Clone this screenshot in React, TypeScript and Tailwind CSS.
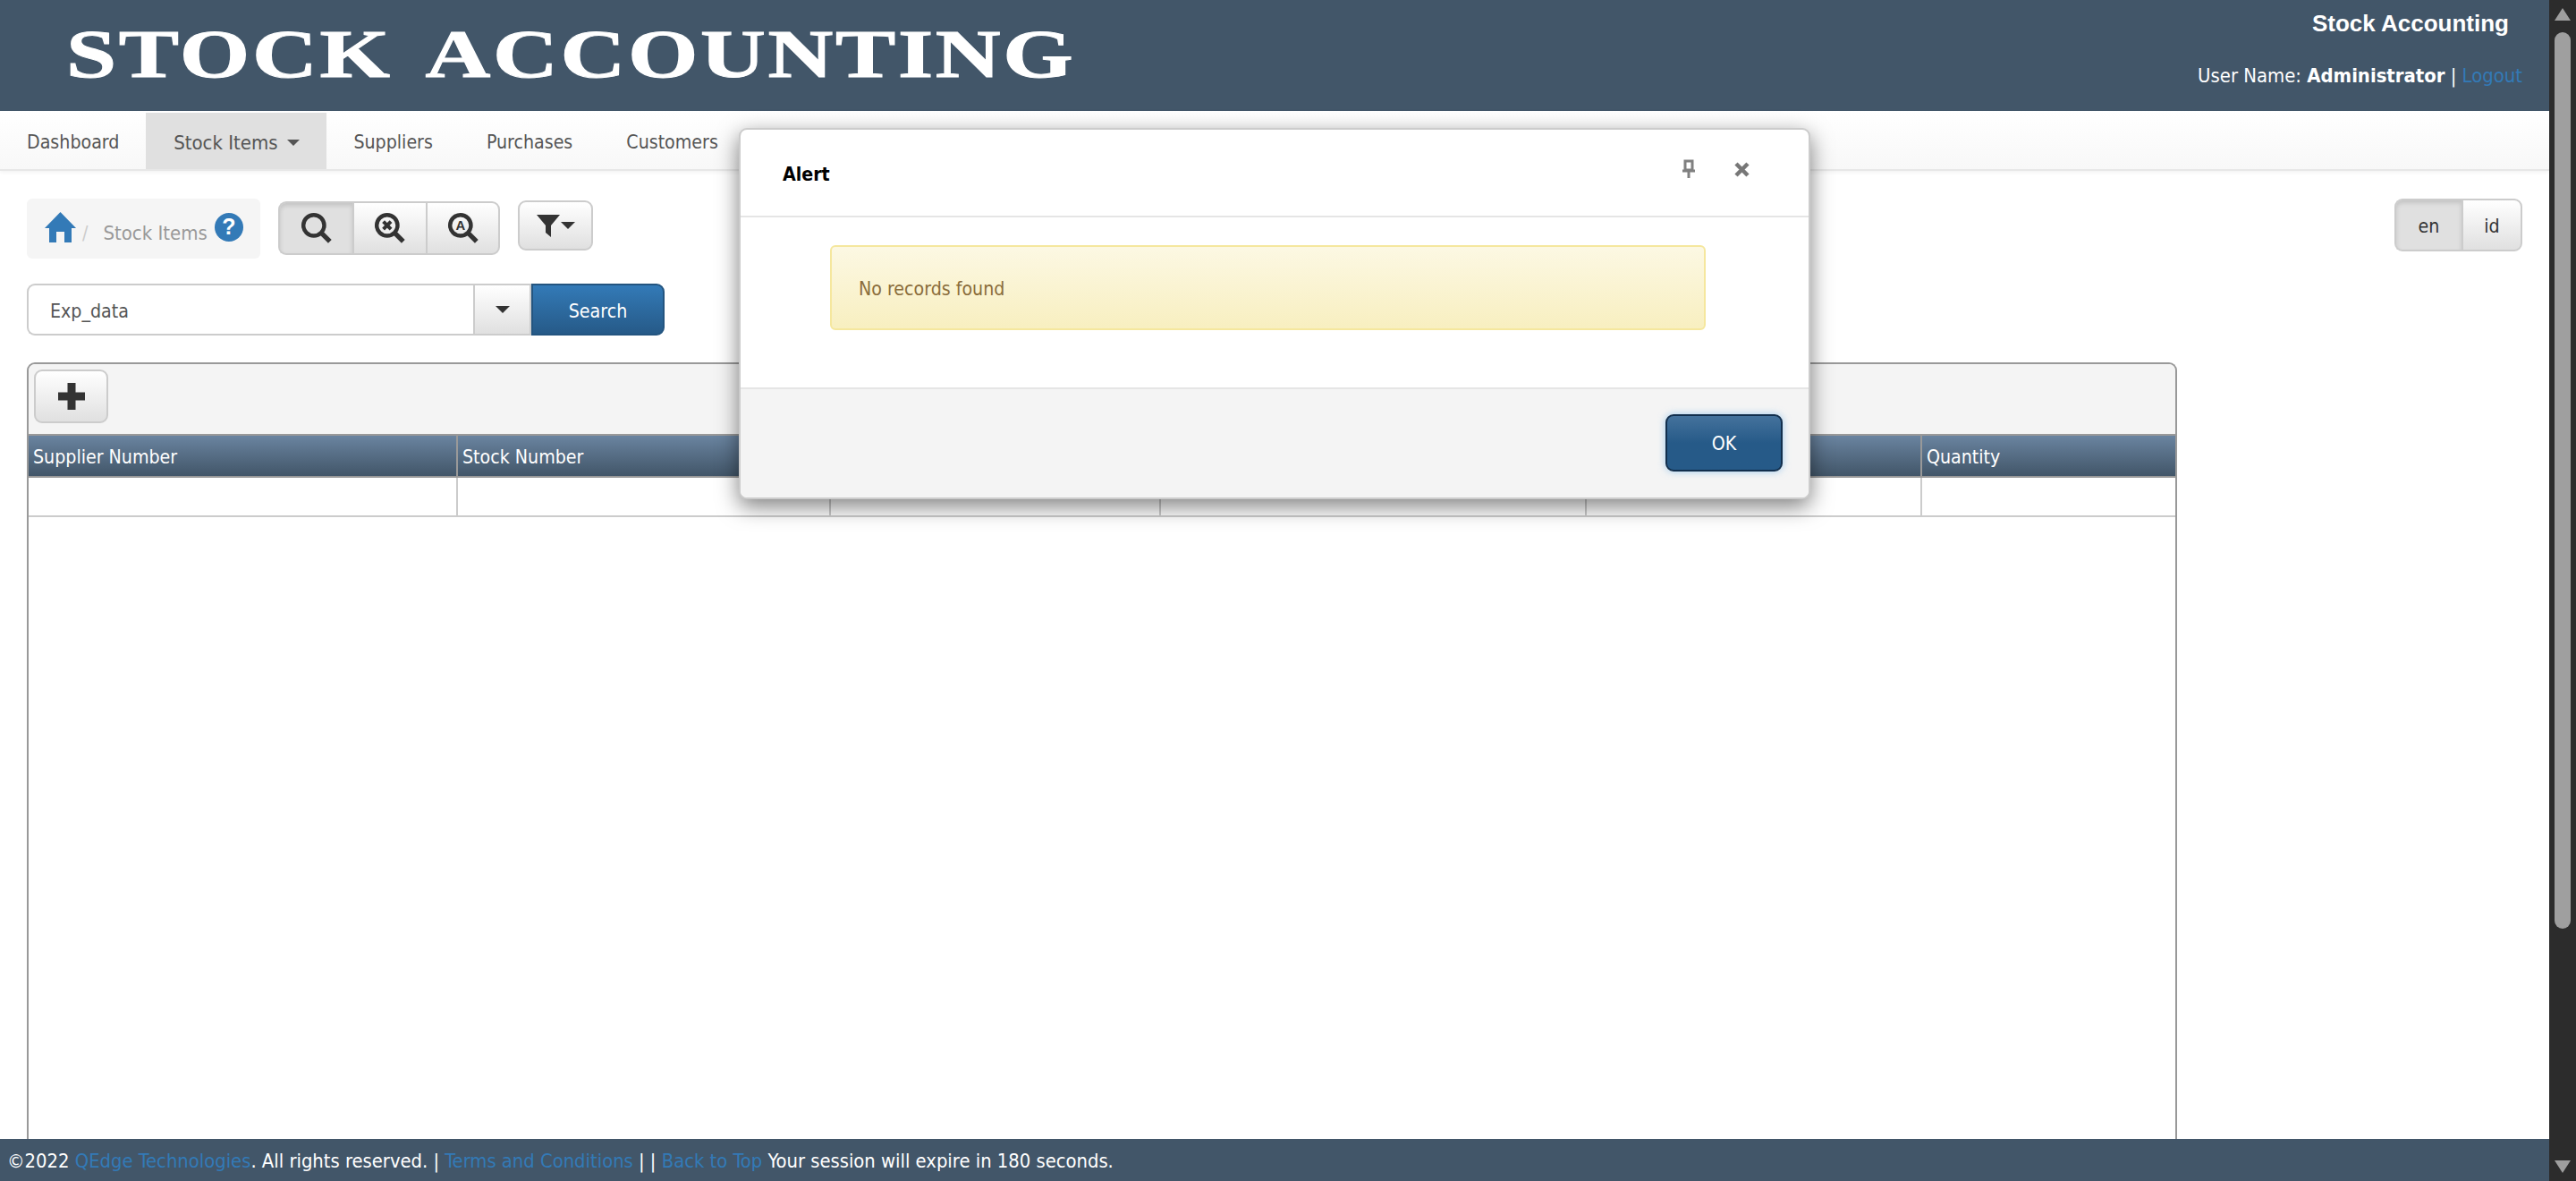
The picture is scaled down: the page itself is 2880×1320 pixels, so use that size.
import React from "react";

const tahoma = "font-['DejaVu_Sans_Condensed','DejaVu_Sans',sans-serif]";
const cols = ["Supplier Number", "Stock Number", "", "", "", "Quantity"];
const colWidths = ["w-[480px]", "w-[417px]", "w-[369px]", "w-[476px]", "w-[375px]", "flex-1"];
const navItems = ["Suppliers", "Purchases", "Customers"];

const Lens = ({ children }: { children?: React.ReactNode }) => (
  <svg width="36" height="36" viewBox="0 0 34 34" fill="none" stroke="#333" strokeWidth="4.2">
    <circle cx="14" cy="14" r="11" />
    <path d="M22 22l9 9" strokeWidth="5" />
    {children}
  </svg>
);

const btnClass =
  "flex items-center justify-center border-2 border-[#ccc] bg-gradient-to-b from-white to-[#e0e0e0]";

const App = () => {
  return (
    <div className={`relative flex h-screen overflow-hidden bg-white text-[21.2px] ${tahoma}`}>
      <div className="flex min-w-0 flex-1 flex-col">
        <header className="flex h-[124px] shrink-0 justify-between bg-[#425669] pl-[74px] pr-[30px] text-white">
          <div className="mt-[16px] origin-left scale-x-[1.327] font-['Liberation_Serif',serif] text-[76px] font-bold leading-[88px] tracking-[2px] whitespace-nowrap [word-spacing:11px] [-webkit-text-stroke:1px_#fff]">
            STOCK ACCOUNTING
          </div>
          <div className="flex flex-col items-end">
            <div className="mr-[15px] mt-[10px] font-['Liberation_Sans',sans-serif] text-[26px] font-bold leading-[32px]">
              Stock Accounting
            </div>
            <div className="mt-[29px] text-[21.9px] leading-[28px]">
              User Name: <b>Administrator</b> | <span className="text-[#337ab7]">Logout</span>
            </div>
          </div>
        </header>

        <nav className="flex h-[67px] shrink-0 items-stretch border-b-2 border-[#e7e7e7] bg-gradient-to-b from-white to-[#f8f8f8] pt-[2px] text-[#555] shadow-[0_2px_4px_rgba(0,0,0,0.05)]">
          <div className="flex items-center pl-[30px] pr-[30px] pt-[3px]">Dashboard</div>
          <div className="flex w-[202px] items-center justify-center gap-[10px] bg-[#e0e0e0] pt-[3px] text-[22px]">
            Stock Items
            <span className="border-x-[7px] border-t-[7px] border-x-transparent border-t-[#555]" />
          </div>
          {navItems.map((n) => (
            <div key={n} className="flex items-center px-[30px] pt-[3px]">
              {n}
            </div>
          ))}
        </nav>

        <div className="flex min-h-0 flex-1 flex-col px-[30px]">
          <div className="mt-[31px] flex items-start">
            <div className="flex h-[67px] w-[261px] items-center rounded-[6px] bg-[#f5f5f5] pl-[20px]">
              <svg width="35" height="34" viewBox="0 0 35 34" fill="#337ab7" className="-mt-[4px]">
                <path d="M17.5 0L35 18h-5v16h-8V22h-9v12H5V18H0z" />
              </svg>
              <span className="ml-[7px] mt-[10px] text-[#ccc]">/</span>
              <span className="ml-[17px] mt-[10px] text-[22px] text-[#999]">Stock Items</span>
              <span className="-mt-[4px] ml-[8px] flex h-[32px] w-[32px] items-center justify-center rounded-full bg-[#337ab7] font-['Liberation_Sans',sans-serif] text-[25px] font-bold text-white">
                ?
              </span>
            </div>
            <div className="ml-[20px] mt-[3px] flex h-[60px]">
              <div className="flex w-[83px] items-center justify-center rounded-l-[9px] border-2 border-r-0 border-[#ccc] bg-[#e0e0e0] shadow-[inset_0_3px_5px_rgba(0,0,0,0.125)]">
                <Lens />
              </div>
              <div className={`w-[82px] border-r-0 ${btnClass}`}>
                <Lens>
                  <path d="M10 10l8 8M18 10l-8 8" strokeWidth="3.8" />
                </Lens>
              </div>
              <div className={`w-[83px] rounded-r-[9px] ${btnClass}`}>
                <Lens>
                  <text x="14" y="19" textAnchor="middle" fontSize="14" fontWeight="700" fill="#333" stroke="none" fontFamily="Liberation Sans">
                    A
                  </text>
                </Lens>
              </div>
            </div>
            <div className={`ml-[20px] mt-[2px] h-[56px] w-[84px] gap-[1px] rounded-[9px] ${btnClass}`}>
              <svg width="26" height="26" viewBox="0 0 26 26" fill="#333">
                <path d="M0 1h26L16 13v13l-6-5v-8z" />
              </svg>
              <span className="border-x-[8px] border-t-[8px] border-x-transparent border-t-[#333]" />
            </div>
            <div className="ml-auto mt-[0px] flex h-[59px]">
              <div className="flex w-[75px] items-center justify-center rounded-l-[9px] border-2 border-r-0 border-[#ccc] bg-[#e0e0e0] pt-[2px] text-[#333] shadow-[inset_0_3px_5px_rgba(0,0,0,0.125)]">
                en
              </div>
              <div className={`w-[68px] rounded-r-[9px] pt-[2px] text-[#333] ${btnClass}`}>id</div>
            </div>
          </div>

          <div className="mt-[28px] flex h-[58px] w-[713px]">
            <div className="flex w-[499px] items-center rounded-l-[9px] border-2 border-r-0 border-[#ccc] bg-white pl-[24px] pt-[3px] text-[#555]">
              Exp_data
            </div>
            <div className={`w-[65px] ${btnClass}`}>
              <span className="border-x-[8px] border-t-[8px] border-x-transparent border-t-[#333]" />
            </div>
            <div className="flex w-[149px] items-center justify-center rounded-r-[9px] border-2 border-[#245580] bg-gradient-to-b from-[#337ab7] to-[#265a88] pt-[3px] text-white">
              Search
            </div>
          </div>

          <div className="mt-[30px] flex w-[2404px] flex-1 flex-col rounded-t-[9px] border-x-2 border-t-2 border-[#999]">
            <div className="h-[78px] shrink-0 rounded-t-[8px] bg-[#f4f4f4] pl-[6px] pt-[6px]">
              <div className={`h-[60px] w-[83px] rounded-[9px] ${btnClass}`}>
                <svg width="30" height="30" viewBox="0 0 30 30" fill="#333">
                  <path d="M10.5 0h9v10.5H30v9H19.5V30h-9V19.5H0v-9h10.5z" />
                </svg>
              </div>
            </div>
            <div className="flex h-[49px] shrink-0 border-y-2 border-[#999] bg-gradient-to-b from-[#6a84a0] to-[#425669] text-white">
              {cols.map((c, i) => (
                <div key={i} className={`flex items-center border-r-2 border-[#999] pl-[5px] pt-[2px] last:border-r-0 ${colWidths[i]}`}>
                  {c}
                </div>
              ))}
            </div>
            <div className="flex h-[44px] shrink-0 border-b-2 border-[#ccc]">
              {cols.map((c, i) => (
                <div key={i} className={`border-r-2 border-[#ccc] last:border-r-0 ${colWidths[i]}`} />
              ))}
            </div>
          </div>
        </div>

        <footer className="flex h-[47px] shrink-0 items-center whitespace-pre bg-[#425669] pl-[8px] pt-[3px] text-[21.8px] text-white">
          ©2022 <span className="text-[#337ab7]">QEdge Technologies</span>. All rights reserved. | <span className="text-[#337ab7]">Terms and Conditions</span> | | <span className="text-[#337ab7]">Back to Top</span> Your session will expire in 180 seconds.
        </footer>
      </div>

      <div className="flex w-[30px] shrink-0 flex-col items-center bg-[#2c2c2c] pt-[9px]">
        <span className="border-x-[9px] border-b-[14px] border-x-transparent border-b-[#9f9f9f]" />
        <div className="mt-[13px] h-[1002px] w-[18px] rounded-full bg-[#9f9f9f]" />
        <span className="mt-auto mb-[9px] border-x-[9px] border-t-[14px] border-x-transparent border-t-[#9f9f9f]" />
      </div>

      <div className="absolute left-[826px] top-[143px] flex h-[415px] w-[1198px] flex-col rounded-[9px] border-2 border-[#ccc] bg-white shadow-[0_8px_24px_rgba(0,0,0,0.5)]">
        <div className="flex h-[98px] shrink-0 items-center justify-between border-b-2 border-[#e5e5e5] pl-[47px] pr-[66px]">
          <span className="mt-[4px] font-bold text-black">Alert</span>
          <div className="-mt-[8px] flex items-center gap-[43px]">
            <svg width="16" height="22" viewBox="0 0 16 22" fill="none" stroke="#808080" strokeWidth="3">
              <path d="M4 2h8v10H4zM1 13h14M8 13v8" />
            </svg>
            <svg width="17" height="17" viewBox="0 0 17 17" stroke="#777" strokeWidth="4.5">
              <path d="M2 2l13 13M15 2L2 15" />
            </svg>
          </div>
        </div>
        <div className="flex-1 pl-[100px] pr-[115px] pt-[31px]">
          <div className="flex h-[95px] items-center rounded-[6px] border-2 border-[#f5e79e] bg-gradient-to-b from-[#fcf8e3] to-[#f8efc0] pl-[30px] pt-[2px] text-[#8a6d3b]">
            No records found
          </div>
        </div>
        <div className="flex h-[123px] shrink-0 items-start justify-end rounded-b-[8px] border-t-2 border-[#e5e5e5] bg-[#f4f4f4] pr-[29px] pt-[28px]">
          <div className="flex h-[64px] w-[131px] items-center justify-center rounded-[9px] border-2 border-[#122f4d] bg-gradient-to-b from-[#44729c] from-0% to-[#265a88] to-50% pt-[2px] text-white shadow-[0_0_8px_rgba(102,175,233,0.6)]">
            OK
          </div>
        </div>
      </div>
    </div>
  );
};

export default App;
